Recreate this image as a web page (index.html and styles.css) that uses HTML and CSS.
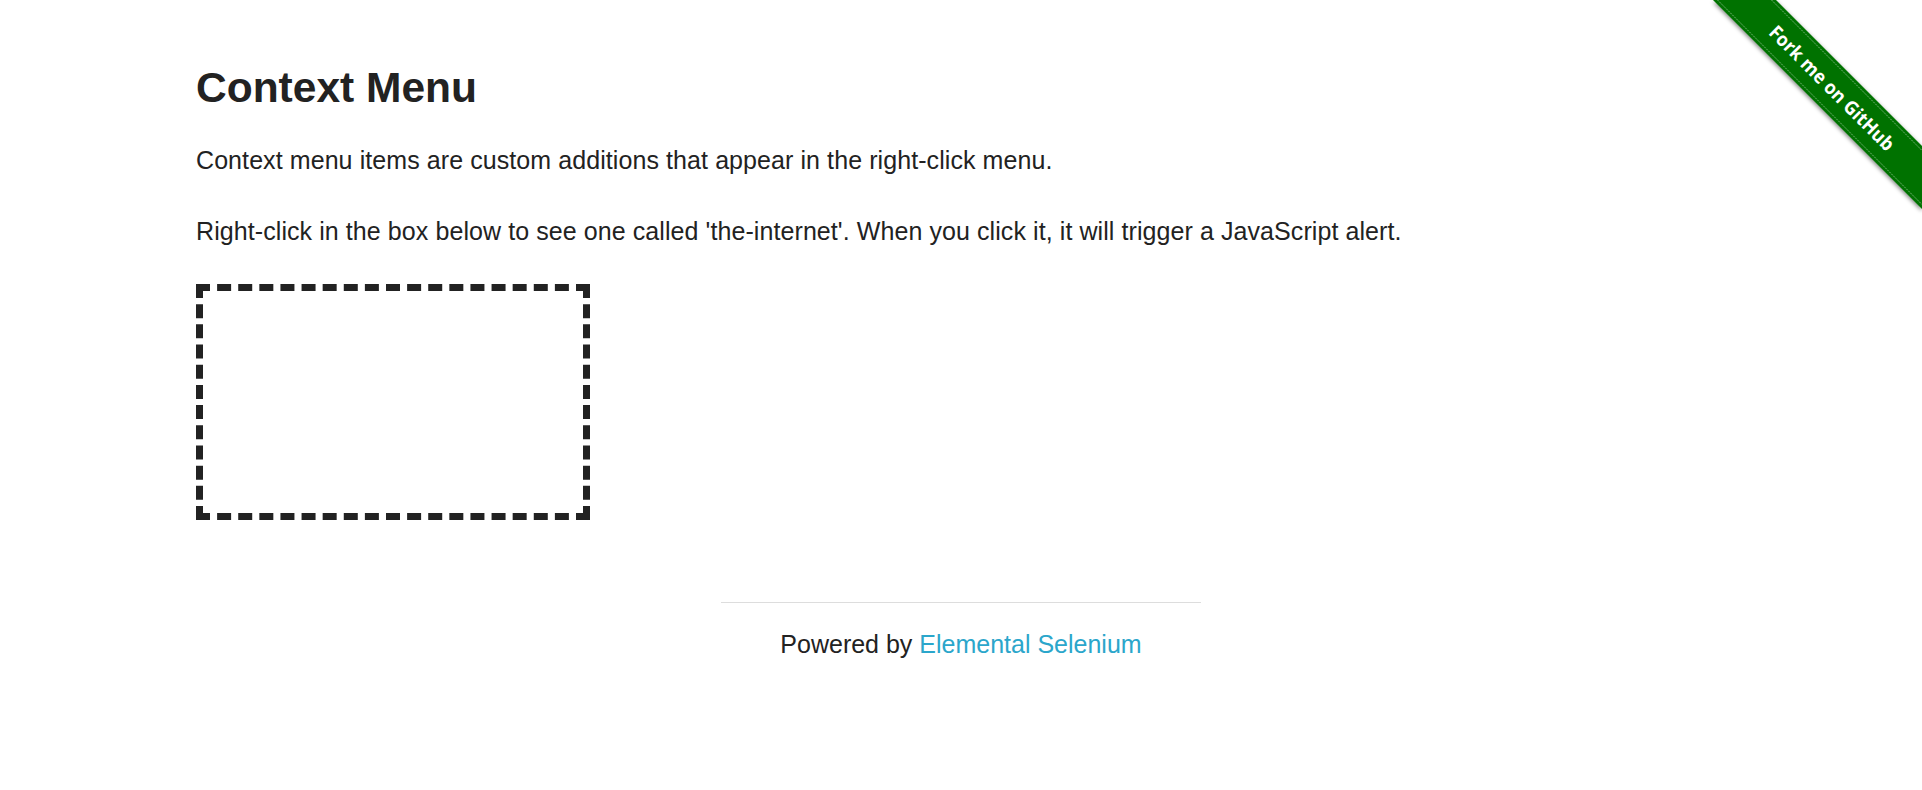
FILE: index.html
```html
<!DOCTYPE html>
<html lang="en">
<head>
<meta charset="utf-8">
<title>The Internet</title>
<link rel="stylesheet" href="styles.css">
</head>
<body>
<a class="ribbon" href="#" aria-label="Fork me on GitHub">
  <svg width="224" height="224" viewBox="0 0 224 224">
    <defs>
      <filter id="sh" x="-20%" y="-20%" width="140%" height="140%">
        <feGaussianBlur in="SourceAlpha" stdDeviation="2"/>
        <feOffset dx="0" dy="2" result="b"/>
        <feComponentTransfer><feFuncA type="linear" slope="0.5"/></feComponentTransfer>
        <feMerge><feMergeNode/><feMergeNode in="SourceGraphic"/></feMerge>
      </filter>
    </defs>
    <polygon points="15,0 78,0 224,146 224,209" fill="#007200" filter="url(#sh)"/>
    <line x1="73.5" y1="0" x2="224" y2="150.5" stroke="#ffffff" stroke-opacity="0.45" stroke-width="1" stroke-dasharray="2 1"/>
    <line x1="19.5" y1="0" x2="224" y2="204.5" stroke="#ffffff" stroke-opacity="0.45" stroke-width="1" stroke-dasharray="2 1"/>
    <text x="134" y="88" transform="rotate(45 134 88)" text-anchor="middle" dominant-baseline="central" class="ribbon-text" textLength="168" lengthAdjust="spacingAndGlyphs">Fork me on GitHub</text>
  </svg>
</a>
<div class="row">
  <div class="columns content">
    <h3 class="title">Context Menu</h3>
    <p class="para">Context menu items are custom additions that appear in the right-click menu.</p>
    <p class="para">Right-click in the box below to see one called 'the-internet'. When you click it, it will trigger a JavaScript alert.</p>
    <div class="hot-spot"></div>
  </div>
</div>
<div class="row footer">
  <div class="columns footer-col">
    <hr class="rule">
    <div class="powered">Powered by <a class="link" href="#">Elemental Selenium</a></div>
  </div>
</div>
</body>
</html>
```
FILE: styles.css
```css
html, body {
  margin: 0;
  padding: 0;
  background: #ffffff;
}
body {
  font-family: "Liberation Sans", Arial, Helvetica, sans-serif;
  color: #222222;
  font-size: 25px;
}
.ribbon {
  position: absolute;
  top: 0;
  right: 0;
  width: 224px;
  height: 224px;
  display: block;
}
.ribbon svg {
  display: block;
}
.ribbon-text {
  fill: #ffffff;
  font-family: "Open Sans", "DejaVu Sans", sans-serif;
  font-weight: 700;
  font-size: 19px;
}
.row {
  max-width: 1575px;
  margin: 0 auto;
}
.columns {
  padding: 0 22.5px;
}
.content {
  padding-top: 59px;
}
.title {
  margin: 0 0 24px;
  font-size: 42.5px;
  line-height: 58px;
  font-weight: bold;
  color: #222222;
}
.para {
  margin: 0 0 33px;
  line-height: 38.4px;
  letter-spacing: 0.08px;
}
.hot-spot {
  width: 380px;
  height: 222px;
  border: 7px dashed #222222;
}
.footer {
  padding-top: 82px;
}
.footer-col {
  width: 480px;
  margin: 0 auto;
}
.rule {
  border: 0;
  border-top: 1px solid #dddddd;
  margin: 0 0 22px;
  height: 0;
}
.powered {
  text-align: center;
  line-height: 38.4px;
}
.link {
  color: #2ba6cb;
  text-decoration: none;
}
```
